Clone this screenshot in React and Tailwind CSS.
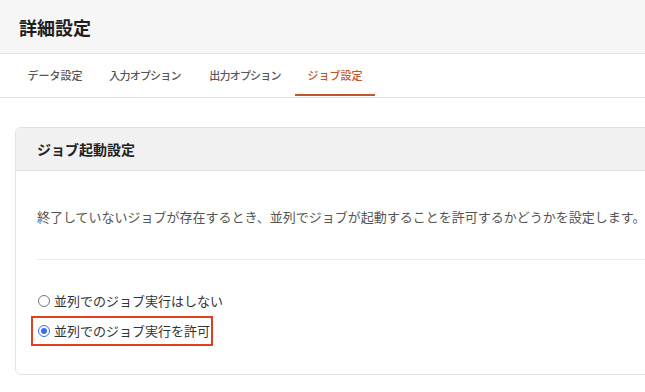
export default function App() {
  const tabs = [
    { label: "データ設定", w: "w-[80px]" },
    { label: "入力オプション", w: "w-[100px] tracking-[-0.8px]" },
    { label: "出力オプション", w: "w-[100px] tracking-[-0.8px]" },
    { label: "ジョブ設定", w: "w-[80px]", active: true },
  ];
  return (
    <div className="w-[645px] h-[392px] overflow-hidden bg-white font-['Noto_Sans_CJK_JP',sans-serif]">
      <div className="h-[54px] bg-[#f6f6f6] border-b border-[#e2e2e2] flex items-center px-[19px]">
        <h1 className="text-[18px] font-bold text-[#1e1e1e] leading-none">詳細設定</h1>
      </div>
      <div className="h-[44px] border-b border-[#e2e2e2] flex pl-[15px]">
        {tabs.map((t) => (
          <div
            key={t.label}
            className={`${t.w} relative flex items-center justify-center text-[11px] font-medium ${
              t.active ? "text-[#c0562e]" : "text-[#555]"
            }`}
          >
            {t.label}
            {t.active && <span className="absolute left-0 right-0 bottom-[1px] h-[2px] bg-[#c0562e]" />}
          </div>
        ))}
      </div>
      <div className="ml-[15px] mt-[29px] w-[720px] border border-[#e2e2e2] rounded-[6px] overflow-hidden">
        <div className="h-[43px] bg-[#f1f1f1] border-b border-[#e2e2e2] flex items-center px-[21px]">
          <h2 className="text-[14px] font-bold text-[#222]">ジョブ起動設定</h2>
        </div>
        <div className="pl-[21px] pt-[36px] pb-[28px]">
          <p className="text-[13px] leading-[20px] text-[#555] whitespace-nowrap">
            終了していないジョブが存在するとき、並列でジョブが起動することを許可するかどうかを設定します。
          </p>
          <div className="mt-[32px] border-t border-[#ececec]" />
          <div className="mt-[26px] -ml-[6px] flex flex-col items-start">
            <label className="h-[30px] whitespace-nowrap border-2 border-transparent flex items-center pl-[5px] pr-[5px] gap-[4px] text-[13px] text-[#333]">
              <span className="w-[12px] h-[12px] rounded-full border border-[#767676] bg-white shrink-0" />
              並列でのジョブ実行はしない
            </label>
            <label className="h-[30px] w-[182px] whitespace-nowrap border-2 border-[#e0401f] flex items-center pl-[5px] gap-[4px] text-[13px] text-[#333]">
              <span className="w-[12px] h-[12px] rounded-full border border-[#3a6df0] bg-white shrink-0 flex items-center justify-center">
                <span className="w-[6px] h-[6px] rounded-full bg-[#3a6df0]" />
              </span>
              並列でのジョブ実行を許可
            </label>
          </div>
        </div>
      </div>
    </div>
  );
}
